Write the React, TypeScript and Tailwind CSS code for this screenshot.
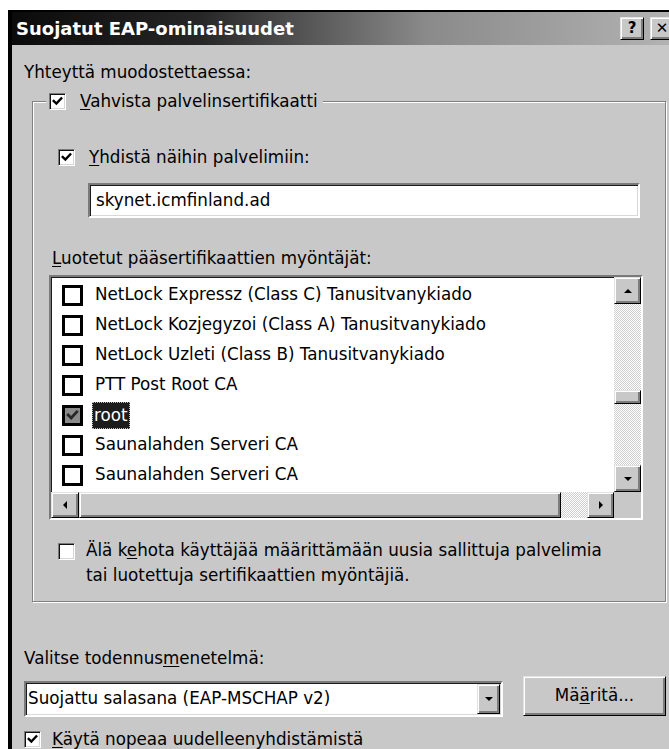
import React from "react";

const FACE = "bg-[#c8c8c8]";

const Tick = ({ className = "" }: { className?: string }) => (
  <svg viewBox="0 0 16 16" className={className} aria-hidden>
    <path d="M3.4 7.4 L6.6 10.6 L12.6 4.2" fill="none" stroke="currentColor" strokeWidth="3" strokeLinecap="square" />
  </svg>
);

// Sunken 3D checkbox used on the dialog surface
const Box3D = ({ checked }: { checked?: boolean }) => (
  <span className="inline-flex w-[17px] h-[17px] shrink-0 items-center justify-center bg-white border border-t-[#7a7a7a] border-l-[#7a7a7a] border-b-white border-r-white shadow-[inset_1px_1px_0_#111,inset_-1px_-1px_0_#d6d6d6] text-black">
    {checked && <Tick className="w-[13px] h-[13px]" />}
  </span>
);

// Flat checkbox drawn inside list views
const FlatBox = ({ checked }: { checked?: boolean }) => (
  <span
    className={
      "inline-flex w-[21px] h-[21px] shrink-0 items-center justify-center border-[3px] border-black " +
      (checked ? "bg-[#8a8a8a] text-[#262626]" : "bg-white")
    }
  >
    {checked && <Tick className="w-[15px] h-[15px]" />}
  </span>
);

const U = ({ children }: { children: React.ReactNode }) => (
  <span className="underline decoration-1 underline-offset-[2px]">{children}</span>
);

const raised =
  "border border-t-[#e2e2e2] border-l-[#e2e2e2] border-b-black border-r-black shadow-[inset_1px_1px_0_#fff,inset_-2px_-2px_0_#7c7c7c]";
const sunken =
  "border-2 border-t-[#7a7a7a] border-l-[#7a7a7a] border-b-white border-r-white shadow-[inset_1px_1px_0_#1c1c1c,inset_-1px_-1px_0_#d8d8d8]";
const hatch =
  "bg-[repeating-conic-gradient(#ffffff_0%_25%,#cfcfcf_0%_50%)] bg-[length:2px_2px]";

type Dir = "up" | "down" | "left" | "right";
const Arrow = ({ dir }: { dir: Dir }) => {
  const pts: Record<Dir, string> = {
    up: "1,7 5,3 9,7",
    down: "1,3 5,7 9,3",
    left: "7,1 3,5 7,9",
    right: "3,1 7,5 3,9",
  };
  return (
    <svg viewBox="0 0 10 10" className="w-[10px] h-[10px]" aria-hidden>
      <polygon points={pts[dir]} fill="#000" />
    </svg>
  );
};

const ScrollBtn = ({ dir, className = "" }: { dir: Dir; className?: string }) => (
  <div className={`${raised} ${FACE} flex items-center justify-center shrink-0 ${className}`}>
    <Arrow dir={dir} />
  </div>
);

const certs = [
  { name: "NetLock Expressz (Class C) Tanusitvanykiado" },
  { name: "NetLock Kozjegyzoi (Class A) Tanusitvanykiado" },
  { name: "NetLock Uzleti (Class B) Tanusitvanykiado" },
  { name: "PTT Post Root CA" },
  { name: "root", checked: true, selected: true },
  { name: "Saunalahden Serveri CA" },
  { name: "Saunalahden Serveri CA" },
];

export default function App() {
  return (
    <div className="w-[669px] h-[749px] overflow-hidden bg-white pt-[10px] pl-[8px] font-['DejaVu_Sans',sans-serif] text-[16.75px] text-black">
      <div className={`w-[672px] h-[739px] ${FACE} border-t-2 border-l-4 border-black flex flex-col`}>
        {/* caption bar */}
        <div className="h-[33px] shrink-0 flex items-center pl-[4px] pr-[6px] bg-[linear-gradient(90deg,#0b0b0b_0%,#262626_28%,#8a8a8a_62%,#b4b4b4_100%)]">
          <span className="text-white font-bold text-[18px] leading-none">Suojatut EAP-ominaisuudet</span>
          <div className="ml-auto flex gap-[6px]">
            <div className={`${raised} ${FACE} w-[24px] h-[23px] flex items-center justify-center font-bold text-[15px] leading-none`}>?</div>
            <div className={`${raised} ${FACE} w-[24px] h-[23px] flex items-center justify-center font-bold text-[15px] leading-none`}>✕</div>
          </div>
        </div>

        {/* dialog body */}
        <div className="pl-[12px] flex flex-col">
          <div className="mt-[17px] h-[20px] leading-[20px]">Yhteyttä muodostettaessa:</div>

          <fieldset className="mt-[9px] ml-[8px] w-[634px] border border-[#808080] shadow-[1px_1px_0_#fff,inset_1px_1px_0_#fff] pb-[13px]">
            <legend className={`ml-[13px] px-[3px] ${FACE} flex items-center gap-[14px] h-[20px] pr-[5px]`}>
              <Box3D checked />
              <span className="leading-[20px]">
                <U>V</U>ahvista palvelinsertifikaatti
              </span>
            </legend>

            <div className="mt-[36px] ml-[25px] h-[20px] flex items-center gap-[14px]">
              <Box3D checked />
              <span className="leading-[20px]">
                <U>Y</U>hdistä näihin palvelimiin:
              </span>
            </div>

            <div className={`mt-[16px] ml-[55px] w-[552px] h-[35px] bg-white ${sunken} flex items-center pl-[6px]`}>
              skynet.icmfinland.ad
            </div>

            <div className="mt-[30px] ml-[19px] h-[20px] leading-[20px]">
              <U>L</U>uotetut pääsertifikaattien myöntäjät:
            </div>

            {/* certificate list view */}
            <div className={`mt-[7px] ml-[16px] w-[594px] h-[245px] bg-white ${sunken} grid grid-cols-[1fr_27px] grid-rows-[1fr_26px]`}>
              <div className="pt-[3px] overflow-hidden">
                {certs.map((c, i) => (
                  <div key={i} className="h-[30px] flex items-center pl-[11px] gap-[12px] whitespace-nowrap">
                    <FlatBox checked={c.checked} />
                    {c.selected ? (
                      <span className="bg-[#1c1c1c] text-white px-[2px] -ml-[3px] h-[27px] leading-[27px] outline-1 outline-dotted outline-[#bdbdbd] -outline-offset-1">
                        {c.name}
                      </span>
                    ) : (
                      <span>{c.name}</span>
                    )}
                  </div>
                ))}
              </div>

              {/* vertical scroll bar */}
              <div className="flex flex-col">
                <ScrollBtn dir="up" className="h-[27px]" />
                <div className={`h-[86px] ${hatch}`} />
                <div className={`h-[14px] ${raised} ${FACE}`} />
                <div className={`flex-1 ${hatch}`} />
                <ScrollBtn dir="down" className="h-[27px]" />
              </div>

              {/* horizontal scroll bar */}
              <div className="flex">
                <ScrollBtn dir="left" className="w-[28px]" />
                <div className={`flex-1 ${raised} ${FACE}`} />
                <div className={`w-[26px] ${hatch}`} />
                <ScrollBtn dir="right" className="w-[27px]" />
              </div>
              <div className={FACE} />
            </div>

            <div className="mt-[18px] ml-[25px] flex items-start gap-[11px]">
              <span className="mt-[4px]">
                <Box3D />
              </span>
              <span className="leading-[25px]">
                Älä k<U>e</U>hota käyttäjää määrittämään uusia sallittuja palvelimia
                <br />
                tai luotettuja sertifikaattien myöntäjiä.
              </span>
            </div>
          </fieldset>

          <div className="mt-[46px] h-[20px] leading-[20px]">
            Valitse todennus<U>m</U>enetelmä:
          </div>

          <div className="mt-[8px] flex items-start">
            <div className={`mt-[5px] w-[479px] h-[36px] bg-white ${sunken} flex items-center`}>
              <span className="flex-1 pl-[2px] whitespace-nowrap">Suojattu salasana (EAP-MSCHAP v2)</span>
              <ScrollBtn dir="down" className="w-[23px] h-[30px] mr-[1px]" />
            </div>
            <div className={`ml-[20px] w-[143px] h-[40px] ${raised} ${FACE} flex items-center justify-center`}>
              Mä<U>ä</U>ritä...
            </div>
          </div>

          <div className="mt-[12px] h-[20px] flex items-center gap-[11px]">
            <Box3D checked />
            <span className="leading-[20px]">
              <U>K</U>äytä nopeaa uudelleenyhdistämistä
            </span>
          </div>
        </div>
      </div>
    </div>
  );
}
